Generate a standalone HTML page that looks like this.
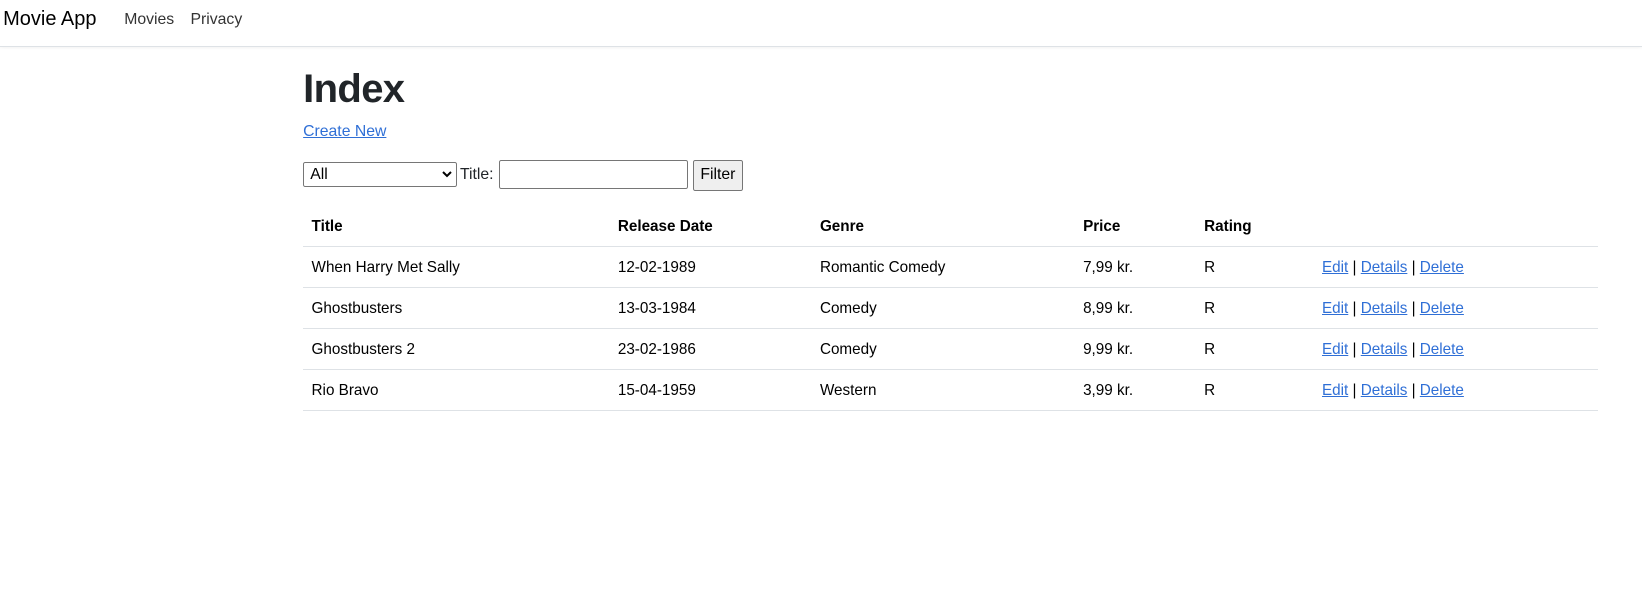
<!DOCTYPE html>
<html><head><meta charset="utf-8"><style>
html,body{margin:0;padding:0;background:#fff;}
body{zoom:1.0526;width:1560px;height:566px;overflow:hidden;position:relative;font-family:"Liberation Sans",sans-serif;color:#212529;font-size:15px;}
.nav{position:absolute;left:0;top:0;width:1560px;height:44px;border-bottom:1px solid #dee2e6;box-shadow:0 1px 3px rgba(0,0,0,.06);}
.brand{position:absolute;left:3px;top:8px;font-size:19px;color:#000;}
.nl{position:absolute;top:10px;font-size:15px;color:#333;}
h1{position:absolute;left:288px;top:64px;margin:0;font-size:38px;font-weight:bold;letter-spacing:-0.6px;}
a{color:#2f6fd6;text-decoration:underline;}
.cn{position:absolute;left:288px;top:117px;font-size:15px;}
select{position:absolute;left:288px;top:154px;width:146px;height:24px;font-size:15px;font-family:"Liberation Sans",sans-serif;border:1px solid #767676;border-radius:2px;background:#fff;padding:0 2px;}
.tl{position:absolute;left:437px;top:158px;font-size:15px;}
input{position:absolute;left:474px;top:152px;width:180px;height:28px;box-sizing:border-box;border:1px solid #767676;border-radius:2px;}
button{position:absolute;left:658px;top:152px;width:48px;height:29px;font-size:15px;font-family:"Liberation Sans",sans-serif;background:#efefef;border:1px solid #767676;border-radius:2px;padding:0;}
table{position:absolute;left:288px;top:196px;width:1230px;border-collapse:collapse;font-size:14.5px;}
td,th{text-align:left;padding:0 8px;height:38px;border-bottom:1px solid #dee2e6;font-weight:normal;color:#000;}
th{font-weight:bold;height:38px;}
</style></head><body>
<div class="nav"><span class="brand">Movie App</span><span class="nl" style="left:118px">Movies</span><span class="nl" style="left:181px">Privacy</span></div>
<h1>Index</h1>
<a class="cn" href="#">Create New</a>
<select><option>All</option></select>
<span class="tl">Title:</span>
<input type="text">
<button>Filter</button>
<table>
<colgroup><col style="width:291px"><col style="width:192px"><col style="width:250px"><col style="width:115px"><col style="width:112px"><col></colgroup>
<tr><th>Title</th><th>Release Date</th><th>Genre</th><th>Price</th><th>Rating</th><th></th></tr>
<tr><td>When Harry Met Sally</td><td>12-02-1989</td><td>Romantic Comedy</td><td>7,99 kr.</td><td>R</td><td><a href="#">Edit</a> | <a href="#">Details</a> | <a href="#">Delete</a></td></tr>
<tr><td>Ghostbusters</td><td>13-03-1984</td><td>Comedy</td><td>8,99 kr.</td><td>R</td><td><a href="#">Edit</a> | <a href="#">Details</a> | <a href="#">Delete</a></td></tr>
<tr><td>Ghostbusters 2</td><td>23-02-1986</td><td>Comedy</td><td>9,99 kr.</td><td>R</td><td><a href="#">Edit</a> | <a href="#">Details</a> | <a href="#">Delete</a></td></tr>
<tr><td>Rio Bravo</td><td>15-04-1959</td><td>Western</td><td>3,99 kr.</td><td>R</td><td><a href="#">Edit</a> | <a href="#">Details</a> | <a href="#">Delete</a></td></tr>
</table>
</body></html>
